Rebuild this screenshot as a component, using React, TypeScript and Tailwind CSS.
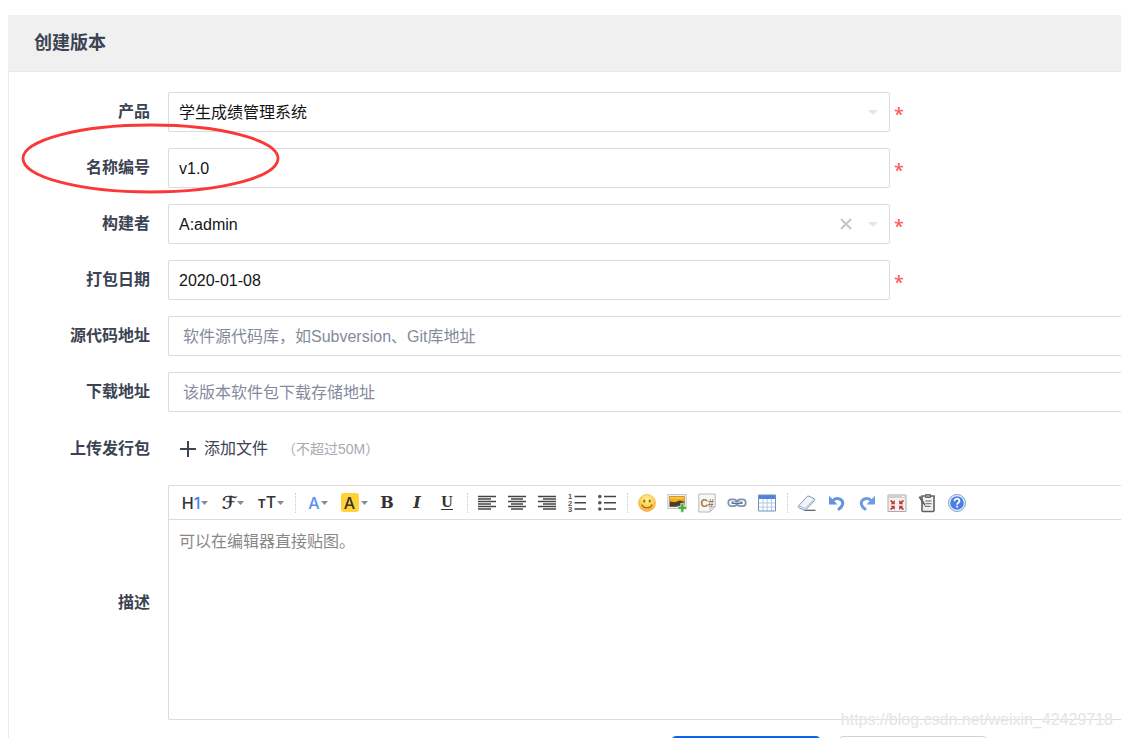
import { ReactNode } from "react";

const inputClass =
  "h-10 w-full rounded-xs border border-[#dcdcdc] bg-white pt-0.5 text-base text-[#141414] outline-none focus:border-blue-500";

function Row({
  label,
  htmlFor,
  children,
  mark,
}: {
  label: string;
  htmlFor: string;
  children: ReactNode;
  mark?: ReactNode;
}) {
  return (
    <div className="relative flex min-h-10 items-center gap-[18px]">
      <label
        htmlFor={htmlFor}
        className="w-[141px] shrink-0 text-right text-base font-bold text-[#3c4353]"
      >
        {label}
      </label>
      <div className="min-w-0 flex-1">{children}</div>
      {mark}
    </div>
  );
}

function Required({ children }: { children: ReactNode }) {
  return (
    <div className="flex items-center gap-1">
      <div className="relative w-full max-w-[722px]">{children}</div>
      <span className="h-5 font-['Open_Sans'] text-lg leading-6 font-semibold text-[#ff5d5d]">
        *
      </span>
    </div>
  );
}

function Caret() {
  return (
    <svg
      className="pointer-events-none absolute top-[18px] right-3 h-[5px] w-[10px]"
      viewBox="0 0 10 5"
      fill="#e2e7ec"
    >
      <path d="M0 0h10L5 5z" />
    </svg>
  );
}

function Tool({ title, children }: { title: string; children: ReactNode }) {
  return (
    <button
      type="button"
      title={title}
      aria-label={title}
      className="flex h-8 w-[30px] shrink-0 items-center justify-center text-[#333]"
    >
      {children}
    </button>
  );
}

function DropTool({
  title,
  wide,
  children,
}: {
  title: string;
  wide?: boolean;
  children: ReactNode;
}) {
  return (
    <button
      type="button"
      title={title}
      aria-label={title}
      className={`flex h-8 shrink-0 items-center justify-center text-[#333] ${
        wide ? "w-[38px]" : "w-9"
      }`}
    >
      {children}
      <svg className="ml-px h-1 w-[7px] shrink-0" viewBox="0 0 7 4" fill="#8a8a8a">
        <path d="M0 0h7L3.5 4z" />
      </svg>
    </button>
  );
}

function Divider() {
  return (
    <span className="flex w-[10px] shrink-0 justify-center">
      <span className="h-5 border-l border-dotted border-[#ccc]" />
    </span>
  );
}

function Icon({ children }: { children: ReactNode }) {
  return (
    <svg className="size-5" viewBox="0 0 20 20" fill="none">
      {children}
    </svg>
  );
}

const Lines = ({ d }: { d: string }) => (
  <Icon>
    <path d={d} stroke="#444" strokeWidth="1.3" />
  </Icon>
);

function Toolbar() {
  return (
    <div className="flex h-[34px] items-center overflow-hidden border-b border-[#dcdcdc] pl-[7px]">
      <DropTool title="段落" wide>
        <span className="font-['Inter'] text-base leading-5 font-medium">
          H<span className="text-[#4a80ea]">1</span>
        </span>
      </DropTool>
      <DropTool title="字体" wide>
        <span className="font-['DejaVu_Sans'] text-lg leading-5 font-bold">ℱ</span>
      </DropTool>
      <DropTool title="文字大小" wide>
        <span className="font-['Inter'] text-xs leading-5 font-bold">
          T<span className="text-base leading-5 font-medium">T</span>
        </span>
      </DropTool>
      <Divider />
      <DropTool title="文字颜色">
        <span className="font-['Inter'] text-base font-medium text-[#5b8ff0]">
          A
        </span>
      </DropTool>
      <DropTool title="文字背景">
        <span className="mr-px flex h-[19px] w-[18px] items-center justify-center rounded-[3px] bg-[#ffd335] font-['Inter'] text-base font-medium">
          A
        </span>
      </DropTool>
      <Tool title="粗体">
        <span className="font-['DejaVu_Serif'] text-base font-bold">B</span>
      </Tool>
      <Tool title="斜体">
        <span className="font-['DejaVu_Serif'] text-base font-bold italic">
          I
        </span>
      </Tool>
      <Tool title="下划线">
        <span className="border-b border-[#333] font-['Liberation_Serif'] text-base leading-[14px] font-bold">
          U
        </span>
      </Tool>
      <Divider />
      <Tool title="左对齐">
        <Lines d="M1 3.5h18M1 6h13M1 8.5h18M1 11h13M1 13.5h18M1 16h13" />
      </Tool>
      <Tool title="居中">
        <Lines d="M1 3.5h18M4 6h12M1 8.5h18M4 11h12M1 13.5h18M4 16h12" />
      </Tool>
      <Tool title="右对齐">
        <Lines d="M1 3.5h18M6 6h13M1 8.5h18M6 11h13M1 13.5h18M6 16h13" />
      </Tool>
      <Tool title="编号">
        <Icon>
          <path d="M7.5 3.5H19M7.500 9.700H19M7.500 16H19" stroke="#444" strokeWidth="1.5" />
          <g fill="#555" fontFamily="Liberation Sans" fontSize="7.5" fontWeight="700">
            <text x="1" y="6">1</text>
            <text x="1" y="12.5">2</text>
            <text x="1" y="19">3</text>
          </g>
        </Icon>
      </Tool>
      <Tool title="项目符号">
        <Icon>
          <path d="M7 3.5h12M7 9.7h12M7 16h12" stroke="#444" strokeWidth="1.5" />
          <g fill="#555">
            <circle cx="2.8" cy="3.5" r="1.8" />
            <circle cx="2.8" cy="9.7" r="1.8" />
            <circle cx="2.8" cy="16" r="1.8" />
          </g>
        </Icon>
      </Tool>
      <Divider />
      <Tool title="插入表情">
        <Icon>
          <defs>
            <radialGradient id="smile" cx="0.5" cy="0.3" r="0.7">
              <stop offset="0" stopColor="#fff2a0" />
              <stop offset="0.6" stopColor="#ffd04a" />
              <stop offset="1" stopColor="#f3a93c" />
            </radialGradient>
          </defs>
          <circle cx="10" cy="10" r="8.5" fill="url(#smile)" stroke="#efb85c" strokeWidth="0.8" />
          <ellipse cx="7.3" cy="8" rx="1" ry="1.5" fill="#8a5a20" />
          <ellipse cx="12.7" cy="8" rx="1" ry="1.5" fill="#8a5a20" />
          <path d="M4.8 11.5c1.6 4.3 8.8 4.3 10.4 0" stroke="#9c6420" strokeWidth="1.2" />
        </Icon>
      </Tool>
      <Tool title="图片">
        <Icon>
          <path d="M.8 1.5h18.4v14H.8z" fill="#f3f3f3" stroke="#c4c4c4" />
          <path d="M2.5 3.2h15v10.6h-15z" fill="#4a3d26" />
          <path d="M2.5 3.2h15v5.6l-5-1.2-4.5 1.600-5.500-.8z" fill="#f5a81c" />
          <path d="M3 4.2h14v1.6H3z" fill="#ffc94b" />
          <path d="M13.8 10.3h3v3h3v3h-3v3h-3v-3h-3v-3h3z" fill="#48ab42" stroke="#e6f6e4" strokeWidth="0.8" />
        </Icon>
      </Tool>
      <Tool title="插入程序代码">
        <Icon>
          <path d="M1.8 1h16.4v12.5L13 19H1.8z" fill="#f7f7f7" stroke="#b9b9b9" />
          <path d="M18.2 13.5H13V19z" fill="#ddd" stroke="#b9b9b9" strokeWidth="0.7" />
          <text x="3.5" y="13.5" fill="#a9784b" fontFamily="Liberation Sans" fontSize="10.5" fontWeight="700">
            C#
          </text>
        </Icon>
      </Tool>
      <Tool title="超级链接">
        <Icon>
          <g stroke="#7d93b2" strokeWidth="1.8">
            <rect x="1.3" y="6.3" width="8.5" height="6.8" rx="3.2" />
            <rect x="10.2" y="6.3" width="8.5" height="6.8" rx="3.2" />
          </g>
          <path d="M5.5 9.7h9" stroke="#5d7292" strokeWidth="2.4" strokeLinecap="round" />
          <path d="M6 9.4h8" stroke="#d8e1ee" strokeWidth="0.8" />
        </Icon>
      </Tool>
      <Tool title="表格">
        <Icon>
          <path d="M1.5 2h17v16h-17z" fill="#fff" />
          <path d="M1.5 2h17v4h-17z" fill="#4f83dd" />
          <path d="M1.5 6v12M6 6v12M10.2 6v12M14.4 6v12M1.5 10h17M1.5 14h17" stroke="#b4c8e6" />
          <path d="M1.5 2h17v16h-17z" stroke="#7590bb" />
        </Icon>
      </Tool>
      <Divider />
      <Tool title="删除格式">
        <Icon>
          <path d="M7 17.3h11.5" stroke="#555" strokeWidth="1.2" />
          <path d="M1.5 13 10 3.6c.6-.6 1.3-.7 2-.4l5 2.5c.9.5 1 1.2.4 2L9.2 16.4c-.7.7-1.4.8-2.2.5l-5-2c-.8-.4-1-1.2-.5-1.9z" fill="#f1f5fb" stroke="#7f93b5" />
          <path d="m1.7 12.8 6.4 2.5L17.5 6" stroke="#a5b5d0" />
        </Icon>
      </Tool>
      <Tool title="后退">
        <Icon>
          <path d="M6 7.2c6-4.5 12.5 1.3 8.6 6.2-1 1.5-2 2.3-3.6 3.3" stroke="#6591dd" strokeWidth="3" />
          <path d="M2 2.8v8.7h8.5z" fill="#6591dd" />
        </Icon>
      </Tool>
      <Tool title="前进">
        <Icon>
          <path d="M14 7.2c-6-4.5-12.5 1.3-8.6 6.2 1 1.5 2 2.3 3.6 3.3" stroke="#6f9be3" strokeWidth="3" />
          <path d="M18 2.8v8.7H9.5z" fill="#6f9be3" />
        </Icon>
      </Tool>
      <Tool title="全屏显示">
        <Icon>
          <path d="M1 2h18v16.5H1z" fill="#f4f2f2" stroke="#aaa" />
          <path d="M1 2h18v3H1z" fill="#cfcfcf" />
          <path d="M15 3.5h2.5" stroke="#fff" />
          <path d="m3.5 7.5 2.5 2M16.5 7.5l-2.5 2M3.5 16.5l2.5-2M16.5 16.5l-2.5-2" stroke="#c94040" strokeWidth="1.7" />
          <path d="M7.8 7v4.2H3.6zM12.2 7v4.2h4.2zM7.8 17v-4.2H3.6zM12.2 17v-4.2h4.2z" fill="#c43535" />
        </Icon>
      </Tool>
      <Tool title="HTML代码">
        <Icon>
          <path d="M5 3h12v14.5c0 .6-.4 1-1 1H6c-.6 0-1-.4-1-1z" fill="#f2f2f0" stroke="#626262" strokeWidth="1.6" />
          <path d="M8.5 1.5h5v3h-5z" fill="#999" stroke="#555" strokeWidth="0.8" />
          <path d="M8.5 8h6M8.5 10.7h6M8.5 13.4h5" stroke="#666" />
          <path d="m2.5 3.5 4.5 7.5" stroke="#666" strokeWidth="2.2" />
          <path d="m7 10.5 1.5 3" stroke="#555" />
        </Icon>
      </Tool>
      <Tool title="帮助">
        <Icon>
          <circle cx="10" cy="10" r="8.5" fill="#e9f0fb" stroke="#7f9fd4" />
          <circle cx="10" cy="10" r="6.8" fill="#4a80e0" />
          <path d="M7.5 8.2c0-3.3 5-3.2 5-.3 0 1.8-2.4 1.9-2.4 3.8M10.1 12.8v1.7" stroke="#fff" strokeWidth="1.7" />
        </Icon>
      </Tool>
    </div>
  );
}

export default function App() {
  return (
    <main className="relative h-screen overflow-hidden bg-white pt-[15px] pl-2 font-['Liberation_Sans','Noto_Sans_CJK_SC',sans-serif]">
      <section className="h-full border-l border-[#ebebeb]">
        <header className="-ml-px flex h-[57px] items-center border-b border-[#e8e8e8] bg-[#f0f0f0] pl-[26px]">
          <h1 className="text-lg font-bold text-[#3c4353]">创建版本</h1>
        </header>

        <form className="flex flex-col gap-4 pt-5">
          <Row label="产品" htmlFor="product">
            <Required>
              <select
                id="product"
                className={`${inputClass} appearance-none px-[10px]`}
              >
                <option>学生成绩管理系统</option>
              </select>
              <Caret />
            </Required>
          </Row>

          <Row
            label="名称编号"
            htmlFor="name"
            mark={
              <svg
                className="pointer-events-none absolute -top-[25px] left-3 h-[71px] w-[260px]"
                viewBox="0 0 260 71"
                fill="none"
              >
                <ellipse cx="129.5" cy="35.5" rx="127.5" ry="33.5" stroke="#fb3838" strokeWidth="2.8" />
              </svg>
            }
          >
            <Required>
              <input
                id="name"
                defaultValue="v1.0"
                className={`${inputClass} px-[10px]`}
              />
            </Required>
          </Row>

          <Row label="构建者" htmlFor="builder">
            <Required>
              <select
                id="builder"
                className={`${inputClass} appearance-none px-[10px]`}
              >
                <option>A:admin</option>
              </select>
              <button
                type="button"
                aria-label="清除"
                className="absolute top-[10px] right-[34px] flex size-5 items-center justify-center"
              >
                <svg className="size-3" viewBox="0 0 12 12" stroke="#c8c8c8" strokeWidth="2.2">
                  <path d="m1 1 10 10M11 1 1 11" />
                </svg>
              </button>
              <Caret />
            </Required>
          </Row>

          <Row label="打包日期" htmlFor="date">
            <Required>
              <input
                id="date"
                defaultValue="2020-01-08"
                className={`${inputClass} px-[10px]`}
              />
            </Required>
          </Row>

          <Row label="源代码地址" htmlFor="scm">
            <input
              id="scm"
              placeholder="软件源代码库，如Subversion、Git库地址"
              className={`${inputClass} rounded-r-none border-r-0 px-[14px] placeholder:text-[#838a9d]`}
            />
          </Row>

          <Row label="下载地址" htmlFor="file-path">
            <input
              id="file-path"
              placeholder="该版本软件包下载存储地址"
              className={`${inputClass} rounded-r-none border-r-0 px-[14px] placeholder:text-[#838a9d]`}
            />
          </Row>

          <Row label="上传发行包" htmlFor="add-file">
            <div className="flex h-[41px] items-center pl-3">
              <button
                id="add-file"
                type="button"
                className="flex items-center gap-2 text-base text-[#3c4353]"
              >
                <svg className="size-4" viewBox="0 0 16 16" stroke="#3c4353" strokeWidth="2">
                  <path d="M8 0v16M0 8h16" />
                </svg>
                添加文件
              </button>
              <span className="ml-[14px] text-sm text-[#a6aab3]">
                （不超过50M）
              </span>
            </div>
          </Row>

          <Row label="描述" htmlFor="desc">
            <div className="rounded-l-xs border border-r-0 border-[#dcdcdc]">
              <Toolbar />
              <textarea
                id="desc"
                placeholder="可以在编辑器直接贴图。"
                className="block h-[199px] w-full resize-none px-[10px] py-[10px] text-base outline-none placeholder:text-[#888]"
              />
            </div>
          </Row>

          <div className="flex gap-[19px] pl-[663px]">
            <button
              type="submit"
              aria-label="保存"
              className="h-10 w-[148px] rounded bg-[#0c64eb]"
            />
            <button
              type="button"
              aria-label="返回"
              className="h-10 w-[148px] rounded border border-[#cbd0db] bg-white"
            />
          </div>
        </form>
      </section>

      <span className="pointer-events-none absolute right-2 bottom-[6px] text-base text-[#e4e4e4] [text-shadow:0_0_1px_#fff]">
        https://blog.csdn.net/weixin_42429718
      </span>
    </main>
  );
}
